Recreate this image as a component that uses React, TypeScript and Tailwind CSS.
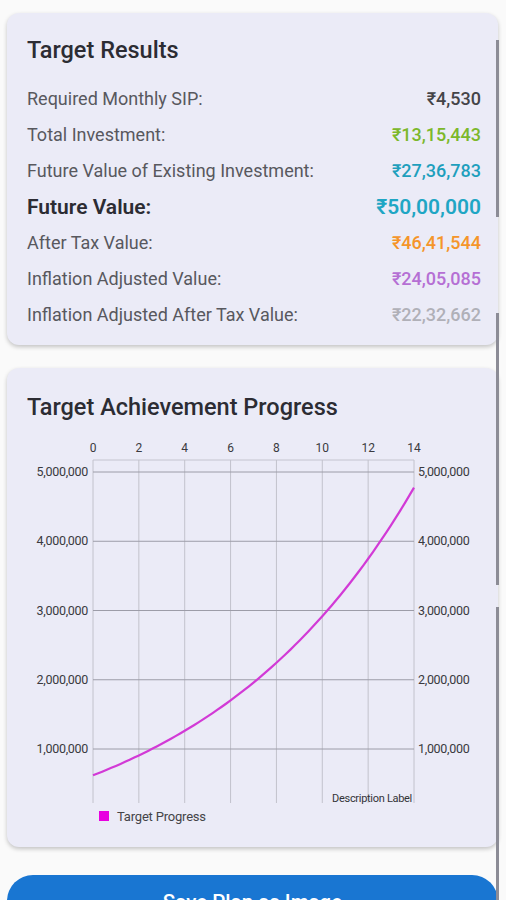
import React from "react";

const rows: { label: string; value: string; valueCls: string; bold?: boolean }[] = [
  { label: "Required Monthly SIP:", value: "₹4,530", valueCls: "text-[#444448]" },
  { label: "Total Investment:", value: "₹13,15,443", valueCls: "text-[#7cb82a]" },
  { label: "Future Value of Existing Investment:", value: "₹27,36,783", valueCls: "text-[#1e9fbd]" },
  { label: "Future Value:", value: "₹50,00,000", valueCls: "text-[#1fa6c4]", bold: true },
  { label: "After Tax Value:", value: "₹46,41,544", valueCls: "text-[#f5952a]" },
  { label: "Inflation Adjusted Value:", value: "₹24,05,085", valueCls: "text-[#b56fd4]" },
  { label: "Inflation Adjusted After Tax Value:", value: "₹22,32,662", valueCls: "text-[#b0b0b8]" },
];

const X0 = 93;
const X1 = 414;
const xOf = (t: number) => X0 + ((X1 - X0) * t) / 14;
const yOf = (v: number) => 818.25 - (v / 1e6) * 69.25;

function valueAt(t: number) {
  const r = 0.112;
  const g = Math.pow(1 + r, t);
  return 620000 * g + 66600 * ((g - 1) / r);
}

function Chart() {
  const pts: string[] = [];
  for (let i = 0; i <= 70; i++) {
    const t = (14 * i) / 70;
    pts.push(`${xOf(t).toFixed(2)},${yOf(valueAt(t)).toFixed(2)}`);
  }
  const d = "M" + pts.join(" L");
  const xt = [0, 2, 4, 6, 8, 10, 12, 14];
  const yt = [1, 2, 3, 4, 5];
  return (
    <svg width={490} height={400} viewBox="7 430 490 400" className="block" style={{ fontFamily: "Roboto, 'Liberation Sans', sans-serif" }}>
      <line x1={X0} y1={460} x2={X1} y2={460} stroke="#c4c4cf" strokeWidth={1} />
      {xt.map((t) => (
        <line key={"v" + t} x1={xOf(t)} y1={460} x2={xOf(t)} y2={803} stroke="#c2c2cc" strokeWidth={1} />
      ))}
      {yt.map((m) => (
        <line key={"h" + m} x1={X0} y1={yOf(m * 1e6)} x2={X1} y2={yOf(m * 1e6)} stroke="#9c9ca8" strokeWidth={1} />
      ))}
      {xt.map((t) => (
        <text key={"xt" + t} x={xOf(t)} y={451.5} textAnchor="middle" fontSize={12} fill="#3a3a40">
          {t}
        </text>
      ))}
      {yt.map((m) => (
        <text key={"yl" + m} x={88} y={yOf(m * 1e6) + 4} textAnchor="end" fontSize={12.5} fill="#3a3a40" letterSpacing={-0.3}>
          {`${m},000,000`}
        </text>
      ))}
      {yt.map((m) => (
        <text key={"yr" + m} x={418} y={yOf(m * 1e6) + 4} textAnchor="start" fontSize={12.5} fill="#3a3a40" letterSpacing={-0.3}>
          {`${m},000,000`}
        </text>
      ))}
      <path d={d} fill="none" stroke="#d23ad6" strokeWidth={2.2} />
      <text x={412} y={801.5} textAnchor="end" fontSize={11} fill="#333338" letterSpacing={-0.3}>
        Description Label
      </text>
      <rect x={99} y={811} width={10} height={10} fill="#e800e0" />
      <text x={117} y={820.5} fontSize={13} fill="#444448" letterSpacing={-0.2}>
        Target Progress
      </text>
    </svg>
  );
}

export default function App() {
  return (
    <div
      className="relative w-[506px] h-[900px] overflow-hidden bg-[#fafafa]"
      style={{ fontFamily: "Roboto, 'Liberation Sans', sans-serif" }}
    >
      <div className="flex flex-col pl-[7px] pr-[8px]">
        {/* Card 1 */}
        <div className="mt-[13px] rounded-[12px] bg-[#ebebf7] shadow-[0_2px_4px_rgba(0,0,0,0.22)] pt-[24px] pb-[12px] pl-[20px] pr-[17px]">
          <div className="h-[28px] flex items-center text-[23.5px] font-medium text-[#2c2c33] leading-none">
            Target Results
          </div>
          <div className="mt-[16px] flex flex-col">
            {rows.map((r) => (
              <div key={r.label} className="h-[36px] flex items-center justify-between leading-none">
                <span
                  className={
                    r.bold
                      ? "text-[21px] font-semibold text-[#2c2c33]"
                      : "text-[18px] text-[#58585e]"
                  }
                >
                  {r.label}
                </span>
                <span
                  className={
                    (r.bold ? "text-[21px] font-semibold " : "text-[18px] font-medium ") + r.valueCls
                  }
                >
                  {r.value}
                </span>
              </div>
            ))}
          </div>
        </div>

        {/* Card 2 */}
        <div className="mt-[23px] rounded-[12px] bg-[#ebebf7] shadow-[0_2px_4px_rgba(0,0,0,0.22)] pt-[26px] pb-[17px]">
          <div className="pl-[20px] h-[28px] flex items-center text-[23.5px] font-medium text-[#2c2c33] leading-none">
            Target Achievement Progress
          </div>
          <div className="mt-[8px]">
            <Chart />
          </div>
        </div>

        {/* Button */}
        <div className="mt-[28px] h-[54px] rounded-[26px] bg-[#1976d2] flex items-center justify-center text-white text-[20.5px] font-medium leading-none">
          Save Plan as Image
        </div>
      </div>

      {/* scrollbar overlay */}
      <div className="absolute left-[496px] top-[40px] w-[3px] h-[177px] bg-[#8c8c96]" />
      <div className="absolute left-[496px] top-[313px] w-[3px] h-[272px] bg-[#8c8c96]" />
      <div className="absolute left-[496px] top-[607px] w-[3px] h-[293px] bg-[#8c8c96]" />
    </div>
  );
}
